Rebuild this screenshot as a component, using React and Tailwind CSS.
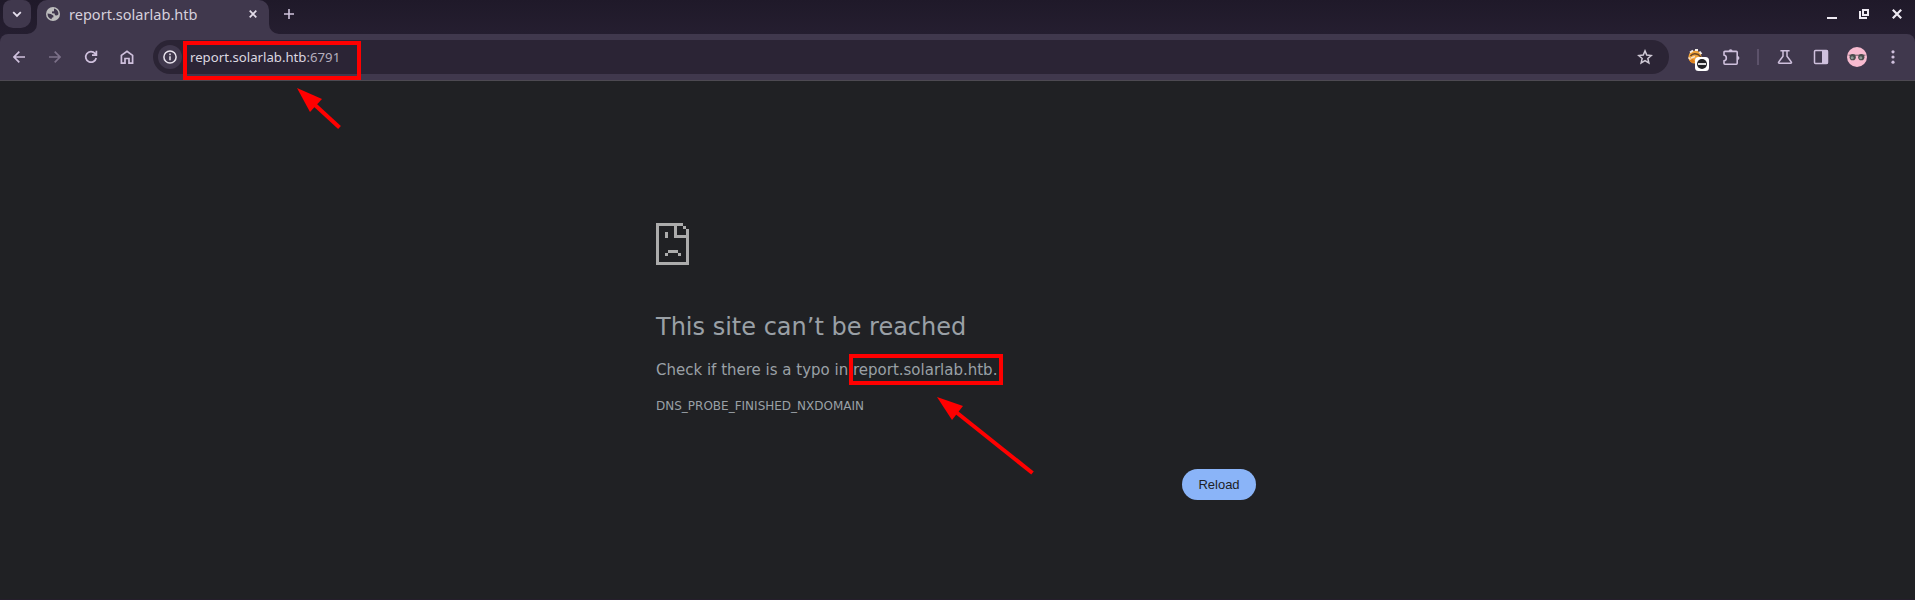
import React from "react";

function Stroke({ size = 16, box = 16, width = 1.7, className = "", children }) {
  return (
    <svg
      width={size}
      height={size}
      viewBox={`0 0 ${box} ${box}`}
      fill="none"
      stroke="currentColor"
      strokeWidth={width}
      className={`shrink-0 ${className}`}
    >
      {children}
    </svg>
  );
}

function TabStrip() {
  return (
    <div className="flex h-[34px] bg-[#231c2d] bg-linear-to-b from-[#1f1929] to-[#251e30]">
      <button className="ml-[3px] flex h-7 w-7 items-center justify-center rounded-[10px] rounded-t-lg bg-[#40384d] text-[#e6e0ee]">
        <Stroke size={10} box={10} width={1.8}>
          <path d="M1.2 3.2 5 6.9l3.8-3.7" />
        </Stroke>
      </button>
      <svg width="10" height="10" viewBox="0 0 10 10" className="-ml-1 shrink-0 self-end fill-[#40384d]">
        <path d="M0 10A10 10 0 0 0 10 0v10Z" />
      </svg>
      <div className="flex h-[34px] w-[232px] items-center rounded-t-[10px] bg-[#40384d] pb-[6px] pl-[9px] pr-[10px]">
        <svg width="14" height="14" viewBox="0 0 14 14" className="shrink-0">
          <circle cx="7" cy="7" r="7" fill="#bdbdbd" />
          <path
            d="M8 1.6Q12.4 2.6 12.5 7.2L11 8.4 9 8.2 8.6 6.6 6 6.2 6 4.6 8 4.2Z M1.5 6.4 4.8 7 7.4 8.6 7.4 10.3 5.8 10.8 5.6 12.3Q1.6 11 1.5 6.4Z"
            fill="#40384d"
          />
        </svg>
        <span className="mb-px ml-[9px] font-['Noto_Sans',sans-serif] text-[14.55px] leading-5 text-[#d6d0dc]">
          report.solarlab.htb
        </span>
        <Stroke size={8} box={8} width={1.7} className="ml-auto mr-[2px] text-[#e3dde9]">
          <path d="m.7.7 6.6 6.6M7.3.7.7 7.3" />
        </Stroke>
      </div>
      <svg width="10" height="10" viewBox="0 0 10 10" className="shrink-0 self-end fill-[#40384d]">
        <path d="M10 10A10 10 0 0 1 0 0v10Z" />
      </svg>
      <Stroke size={10} box={10} width={1.6} className="ml-[5px] mt-[9px] text-[#cfc4dc]">
        <path d="M5 0v10M0 5h10" />
      </Stroke>
      <div className="ml-auto flex pr-[13px] pt-[9px] text-[#eeeaf2]">
        <svg width="10" height="10" viewBox="0 0 10 10" className="fill-current">
          <path d="M0 8h10v2H0z" />
        </svg>
        <svg width="10" height="10" viewBox="0 0 10 10" className="ml-[22px] fill-current">
          <path fillRule="evenodd" d="M3 0h7v7H3zM5 2v3h3V2zM0 2h2v6h6v2H0z" />
        </svg>
        <Stroke size={10} box={10} width={2.2} className="ml-[23px]">
          <path d="m.8.8 8.4 8.4M9.2.8.8 9.2" />
        </Stroke>
      </div>
    </div>
  );
}

function AddressBar() {
  return (
    <div className="ml-[19px] flex h-[34px] w-[1516px] items-center rounded-full bg-[#2b2435] pl-[5px] pr-4">
      <div className="flex h-6 w-6 items-center justify-center rounded-full bg-[#40384d] text-[#e9e4ee]">
        <Stroke size={14} box={14} width={1.5}>
          <circle cx="7" cy="7" r="6.1" />
          <path d="M7 6.2v4.1M7 3.6v1.6" />
        </Stroke>
      </div>
      <div className="relative ml-2 font-['Noto_Sans',sans-serif] text-[13.2px] leading-5 text-[#dcd8e0]">
        report.solarlab.htb<span className="text-[#b5aebd]">:6791</span>
        <div className="absolute -left-[7px] -top-[6px] h-[39px] w-[178px] border-4 border-[#ff0000]" />
      </div>
      <Stroke size={16} box={16} width={1.5} className="ml-auto text-[#cfc9d5]">
        <path d="m8 1.9 1.75 4.2 4.5.4-3.4 3 1 4.4L8 11.6l-3.85 2.3 1-4.4-3.4-3 4.5-.4Z" />
      </Stroke>
    </div>
  );
}

function BlockerIcon() {
  return (
    <svg width="22" height="22" viewBox="0 0 22 22" className="shrink-0">
      <circle cx="8" cy="8" r="6.6" fill="#efa33a" />
      <path d="M3 3.5 6 1.5M8 1h3M12.5 2.5l2 2.5" stroke="#f3eee8" strokeWidth="2" />
      <path d="M3.5 7Q6 3.5 11 5.5L14 8" fill="none" stroke="#6b4726" strokeWidth="1.5" />
      <path d="M1.5 8.5 4 11M4 9l4-1.5" stroke="#f5e2cd" strokeWidth="1.6" />
      <path d="M2 11l3 3 3-1-2-3Z" fill="#dc7d1b" />
      <rect x="8" y="8" width="14" height="14" rx="3.5" fill="#fff" />
      <circle cx="15" cy="15" r="5" fill="#202124" />
      <path d="M11 15h8" stroke="#fff" strokeWidth="1.7" />
    </svg>
  );
}

function Avatar() {
  return (
    <svg width="20" height="20" viewBox="0 0 20 20" className="shrink-0">
      <circle cx="10" cy="10" r="10" fill="#f8bbd0" />
      <path d="M1.6 8.2h16.8" stroke="#6b5f64" strokeWidth="1" />
      <circle cx="5.7" cy="10.2" r="3.1" fill="#4b4d4c" />
      <circle cx="14.3" cy="10.2" r="3.1" fill="#4b4d4c" />
      <circle cx="5.2" cy="10.8" r="1.5" fill="#8d9894" />
      <circle cx="13.8" cy="10.8" r="1.5" fill="#8d9894" />
    </svg>
  );
}

function Toolbar() {
  return (
    <div className="bg-[#251e30]">
      <div className="flex h-[47px] items-center rounded-t-lg border-b border-[#4d4a52] bg-[#40384d] text-[#cfc0dd]">
        <Stroke size={12} box={12} className="ml-[13px]">
          <path d="M12 6H1.3M6.3.7 1 6l5.3 5.3" />
        </Stroke>
        <Stroke size={12} box={12} className="ml-6 text-[#7c7189]">
          <path d="M0 6h10.7M5.7.7 11 6l-5.3 5.3" />
        </Stroke>
        <Stroke size={14} box={14} className="ml-[23px]">
          <path d="M12.2 8A5.3 5.3 0 1 1 11 3.4l1.5 1.5M12.4.8v4.4H8" />
        </Stroke>
        <Stroke size={14} box={14} className="ml-[22px]">
          <path d="M1.4 13.2V5.4L7 1.2l5.6 4.2v7.8H9V8.5H5v4.7Z" />
        </Stroke>
        <AddressBar />
        <div className="ml-[18px] mt-[6px]">
          <BlockerIcon />
        </div>
        <svg width="18" height="18" viewBox="0 0 18 18" className="ml-[13px] shrink-0">
          <path
            d="M2.9 3.4h11.4a.9.9 0 0 1 .9.9v11a.9.9 0 0 1-.9.9H2.9a.9.9 0 0 1-.9-.9v-2.5c3.1-.6 3.100-5.200 0-5.800V4.300a.9.9 0 0 1 .9-.9Z"
            fill="none"
            stroke="currentColor"
            strokeWidth="1.6"
          />
          <path d="M6.600 3.200a2 2 0 0 1 4 0ZM15.400 7.900a2 2 0 0 1 0 4Z" fill="currentColor" />
        </svg>
        <div className="ml-[17px] h-4 w-[2px] bg-[#5c526a]" />
        <Stroke size={16} box={16} width={1.5} className="ml-[18px]">
          <path d="M3.4 1.7h9.2M6 2v5.2L1.7 13a.8.8 0 0 0 .7 1.3h11.2a.8.8 0 0 0 .7-1.3L10 7.2V2" />
        </Stroke>
        <svg width="16" height="16" viewBox="0 0 16 16" className="ml-5 shrink-0">
          <rect x="1.5" y="1.500" width="13" height="13" rx="1" fill="none" stroke="currentColor" strokeWidth="1.5" />
          <path d="M9 1h5.500v14H9z" fill="currentColor" />
        </svg>
        <div className="ml-[18px]">
          <Avatar />
        </div>
        <svg width="4" height="14" viewBox="0 0 4 14" className="ml-6 shrink-0 fill-current">
          <circle cx="2" cy="1.8" r="1.6" />
          <circle cx="2" cy="7" r="1.6" />
          <circle cx="2" cy="12.2" r="1.6" />
        </svg>
      </div>
    </div>
  );
}

function SadPage() {
  return (
    <svg width="33" height="42" viewBox="0 0 33 42" shapeRendering="crispEdges" className="fill-[#acacac]">
      <path d="M0 0h27v3H3v36h27V6h3v36H0z" />
      <path d="M18 3h3v9h9v3H18zM27 3h3v3h-3zM9 9h3v6H9zM12 27h10v3H12zM9 30h3v3H9zM22 30h3v3h-3z" />
    </svg>
  );
}

function ErrorPage() {
  return (
    <main className="h-[519px] border-b border-[#251e2c] bg-[#202124] pl-[656px] pt-[142px] font-['DejaVu_Sans',sans-serif] text-[#9aa0a6]">
      <div className="flex w-[600px] flex-col">
        <SadPage />
        <h1 className="mt-12 text-[24px] leading-7">This site can’t be reached</h1>
        <p className="mt-[17px] text-[15px] leading-6">
          Check if there is a typo in{" "}
          <span className="relative">
            report.solarlab.htb.
            <span className="absolute -left-[4px] -top-[7px] h-[31px] w-[154px] border-4 border-[#ff0000]" />
          </span>
        </p>
        <p className="mt-[15px] text-[12px] leading-[18px]">DNS_PROBE_FINISHED_NXDOMAIN</p>
        <button className="mt-[54px] h-[31px] w-[74px] self-end rounded-full bg-[#8ab4f8] font-['Liberation_Sans',sans-serif] text-[13px] text-[#202124]">
          Reload
        </button>
      </div>
    </main>
  );
}

function Arrows() {
  return (
    <svg width="1915" height="600" viewBox="0 0 1915 600" className="pointer-events-none absolute left-0 top-0" fill="#ff0000" stroke="#ff0000">
      <path d="M297 88 322 99 310 112Z" stroke="none" />
      <path d="M315 105 339.500 127.500" strokeWidth="4" />
      <path d="M937 397 963 406 952 420Z" stroke="none" />
      <path d="M956 412 1032.500 473" strokeWidth="4" />
    </svg>
  );
}

export default function App() {
  return (
    <div className="relative h-[600px] w-[1915px] overflow-hidden">
      <TabStrip />
      <Toolbar />
      <ErrorPage />
      <Arrows />
    </div>
  );
}
